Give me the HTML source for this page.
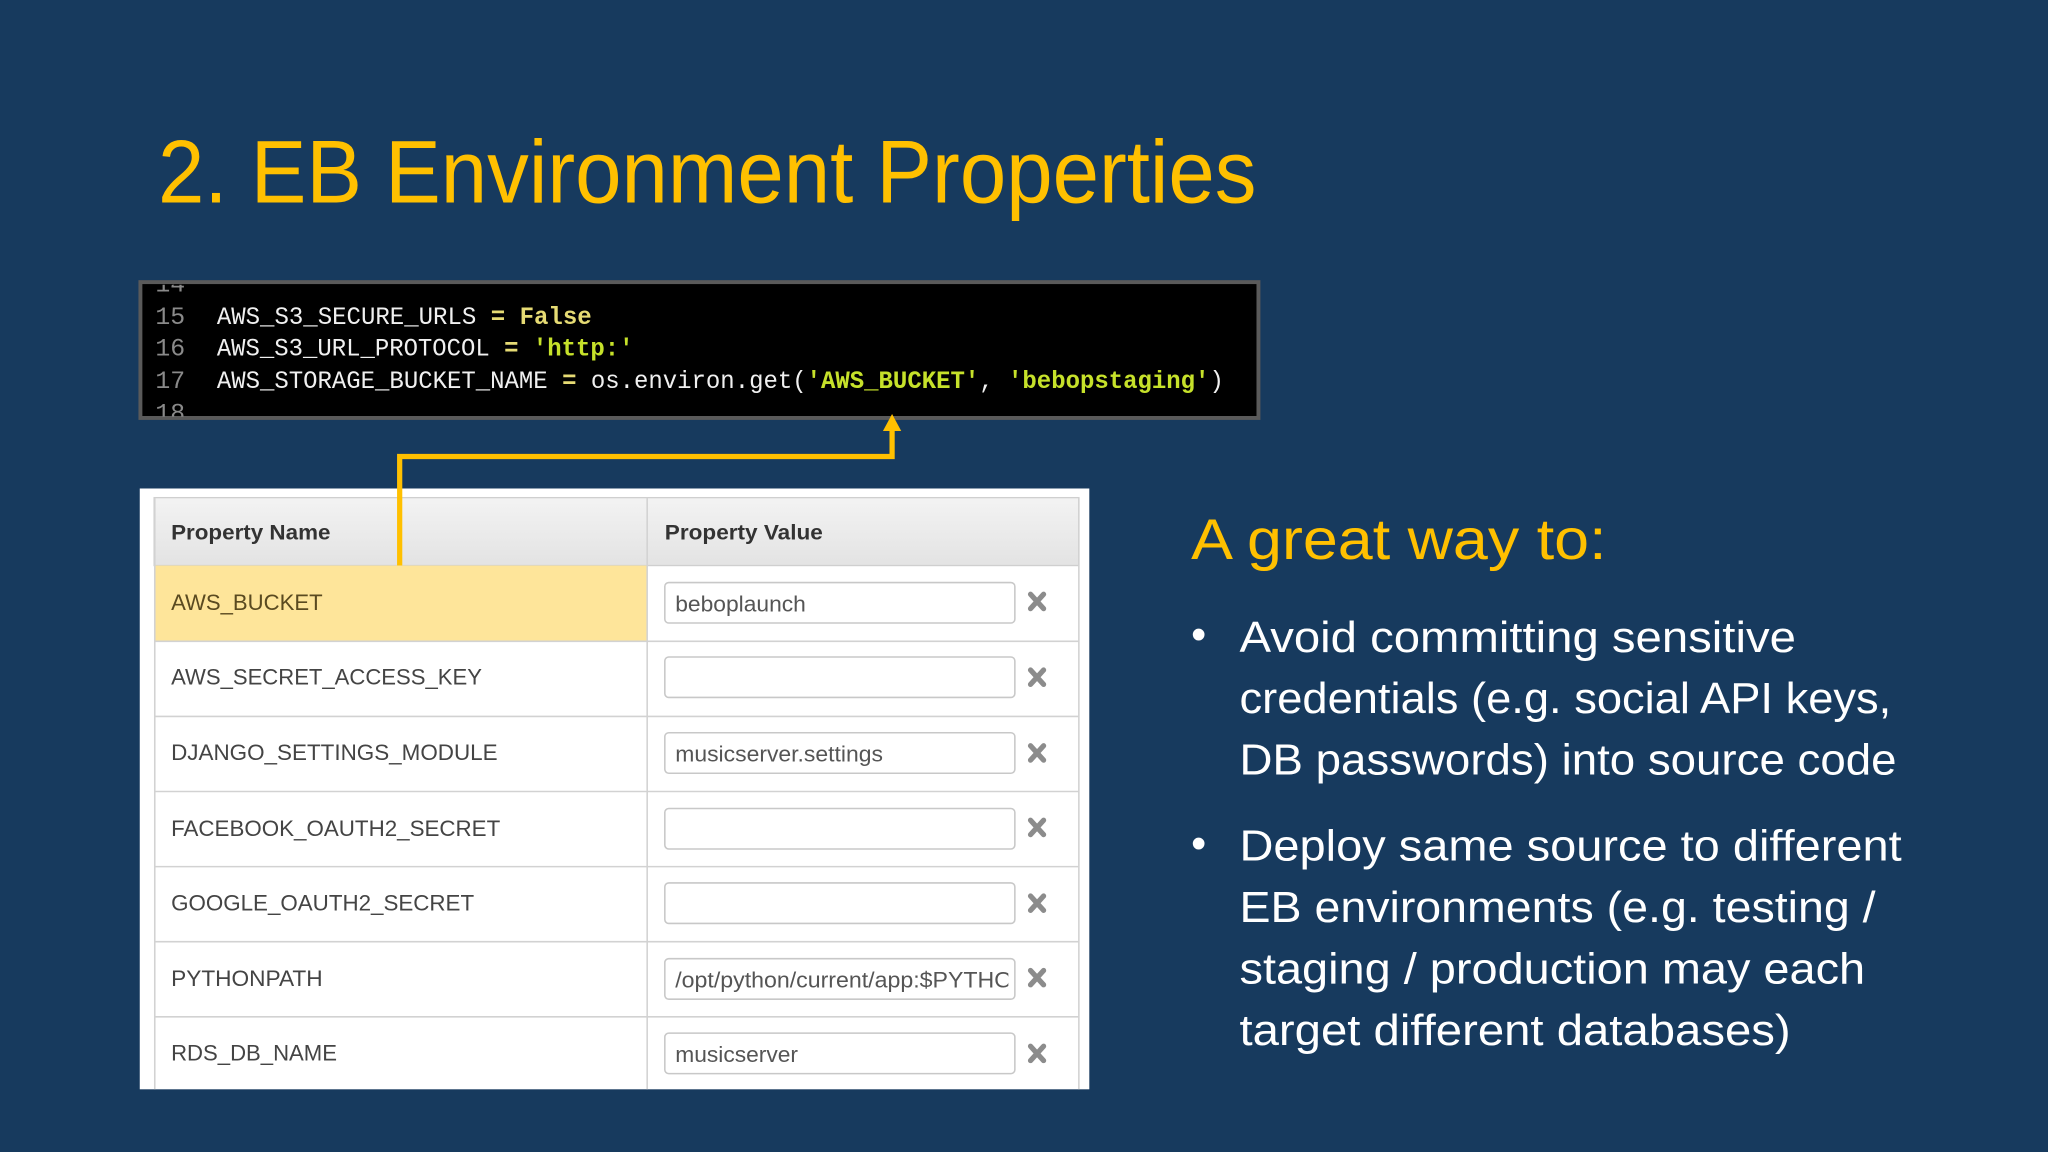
<!DOCTYPE html>
<html><head><meta charset="utf-8"><style>
html,body{margin:0;padding:0;background:#173a5e;}
svg{display:block}
</style></head><body>
<svg width="2048" height="1152" viewBox="0 0 1568 882" xmlns="http://www.w3.org/2000/svg">
<rect width="1568" height="882" fill="#173a5e"/>
<text x="121" y="155" font-family="Liberation Sans, sans-serif" font-size="68" fill="#ffc000" textLength="841" lengthAdjust="spacingAndGlyphs">2. EB Environment Properties</text>

<!-- code box -->
<rect x="107.5" y="216" width="856" height="104" fill="#000" stroke="#5a5a5a" stroke-width="3"/>
<clipPath id="cc"><rect x="109" y="218" width="853" height="101"/></clipPath>
<g clip-path="url(#cc)" font-family="Liberation Mono, monospace" font-size="19">
<text x="119" y="223" fill="#8a8a8a">14</text>
<text x="119" y="248" fill="#8a8a8a">15</text>
<text x="119" y="272" fill="#8a8a8a">16</text>
<text x="119" y="297" fill="#8a8a8a">17</text>
<text x="119" y="322" fill="#8a8a8a">18</text>
<text x="166" y="248" fill="#f0f0f0" textLength="287" lengthAdjust="spacingAndGlyphs">AWS_S3_SECURE_URLS <tspan fill="#e6db74" font-weight="bold">=</tspan> <tspan fill="#e6db74" font-weight="bold">False</tspan></text>
<text x="166" y="272" fill="#f0f0f0" textLength="319" lengthAdjust="spacingAndGlyphs">AWS_S3_URL_PROTOCOL <tspan fill="#e6db74" font-weight="bold">=</tspan> <tspan fill="#c6e12a" font-weight="bold">'http:'</tspan></text>
<text x="166" y="297" fill="#f0f0f0" textLength="771" lengthAdjust="spacingAndGlyphs">AWS_STORAGE_BUCKET_NAME <tspan fill="#e6db74" font-weight="bold">=</tspan> os.environ.get(<tspan fill="#c6e12a" font-weight="bold">'AWS_BUCKET'</tspan>, <tspan fill="#c6e12a" font-weight="bold">'bebopstaging'</tspan>)</text>
</g>

<!-- table panel -->
<rect x="107" y="374" width="727" height="460" fill="#fff"/>
<defs><linearGradient id="hg" x1="0" y1="0" x2="0" y2="1"><stop offset="0" stop-color="#f3f3f3"/><stop offset="1" stop-color="#e3e3e3"/></linearGradient></defs>
<rect x="118" y="381" width="708" height="52" fill="url(#hg)" stroke="#cfcfcf"/>
<rect x="118.5" y="433" width="377" height="58" fill="#fee59a"/>
<g stroke="#d2d2d2" stroke-width="1.2">
<line x1="118.5" y1="381" x2="118.5" y2="834"/>
<line x1="826" y1="381" x2="826" y2="834"/>
<line x1="495.5" y1="381" x2="495.5" y2="834"/>
<line x1="118" y1="491" x2="826" y2="491"/>
<line x1="118" y1="548.5" x2="826" y2="548.5"/>
<line x1="118" y1="606" x2="826" y2="606"/>
<line x1="118" y1="663.5" x2="826" y2="663.5"/>
<line x1="118" y1="721" x2="826" y2="721"/>
<line x1="118" y1="778.5" x2="826" y2="778.5"/>
</g>
<g font-family="Liberation Sans, sans-serif" font-size="16.5" font-weight="bold" fill="#333">
<text x="131" y="413" textLength="122" lengthAdjust="spacingAndGlyphs">Property Name</text>
<text x="509" y="413" textLength="121" lengthAdjust="spacingAndGlyphs">Property Value</text>
</g>
<g font-family="Liberation Sans, sans-serif" font-size="17" fill="#444">
<text x="131" y="467" fill="#5a4a20" textLength="116" lengthAdjust="spacingAndGlyphs">AWS_BUCKET</text>
<text x="131" y="524" textLength="238" lengthAdjust="spacingAndGlyphs">AWS_SECRET_ACCESS_KEY</text>
<text x="131" y="582" textLength="250" lengthAdjust="spacingAndGlyphs">DJANGO_SETTINGS_MODULE</text>
<text x="131" y="640" textLength="252" lengthAdjust="spacingAndGlyphs">FACEBOOK_OAUTH2_SECRET</text>
<text x="131" y="697" textLength="232" lengthAdjust="spacingAndGlyphs">GOOGLE_OAUTH2_SECRET</text>
<text x="131" y="755" textLength="116" lengthAdjust="spacingAndGlyphs">PYTHONPATH</text>
<text x="131" y="812" textLength="127" lengthAdjust="spacingAndGlyphs">RDS_DB_NAME</text>
</g>
<g fill="#fff" stroke="#c8c8c8" stroke-width="1.2">
<rect x="509" y="446" width="268" height="31" rx="3"/>
<rect x="509" y="503" width="268" height="31" rx="3"/>
<rect x="509" y="561" width="268" height="31" rx="3"/>
<rect x="509" y="619" width="268" height="31" rx="3"/>
<rect x="509" y="676" width="268" height="31" rx="3"/>
<rect x="509" y="734" width="268" height="31" rx="3"/>
<rect x="509" y="791" width="268" height="31" rx="3"/>
</g>
<clipPath id="ic"><rect x="510" y="730" width="262" height="40"/></clipPath>
<g font-family="Liberation Sans, sans-serif" font-size="17" fill="#555">
<text x="517" y="468" textLength="100" lengthAdjust="spacingAndGlyphs">beboplaunch</text>
<text x="517" y="583" textLength="159" lengthAdjust="spacingAndGlyphs">musicserver.settings</text>
<text x="517" y="756" clip-path="url(#ic)" textLength="258" lengthAdjust="spacingAndGlyphs">/opt/python/current/app:$PYTHO</text>
<text x="517" y="813" textLength="94" lengthAdjust="spacingAndGlyphs">musicserver</text>
</g>
<g stroke="#8c8c8c" stroke-width="4" stroke-linecap="round">
<path d="M789 455l10 11M799 455l-10 11"/>
<path d="M789 513l10 11M799 513l-10 11"/>
<path d="M789 571l10 11M799 571l-10 11"/>
<path d="M789 628l10 11M799 628l-10 11"/>
<path d="M789 686l10 11M799 686l-10 11"/>
<path d="M789 743l10 11M799 743l-10 11"/>
<path d="M789 801l10 11M799 801l-10 11"/>
</g>

<!-- arrow -->
<path d="M306 433V349.5H683V328" fill="none" stroke="#ffc000" stroke-width="4"/>
<path d="M676 330L683 317L690 330Z" fill="#ffc000"/>

<!-- right text -->
<text x="912" y="428" font-family="Liberation Sans, sans-serif" font-size="44" fill="#ffc000" textLength="318" lengthAdjust="spacingAndGlyphs">A great way to:</text>
<g font-family="Liberation Sans, sans-serif" font-size="33" fill="#fff">
<text x="912" y="497">•</text>
<text x="949" y="499" textLength="426" lengthAdjust="spacingAndGlyphs">Avoid committing sensitive</text>
<text x="949" y="546" textLength="499" lengthAdjust="spacingAndGlyphs">credentials (e.g. social API keys,</text>
<text x="949" y="593" textLength="503" lengthAdjust="spacingAndGlyphs">DB passwords) into source code</text>
<text x="912" y="657">•</text>
<text x="949" y="659" textLength="507" lengthAdjust="spacingAndGlyphs">Deploy same source to different</text>
<text x="949" y="706" textLength="487" lengthAdjust="spacingAndGlyphs">EB environments (e.g. testing /</text>
<text x="949" y="753" textLength="479" lengthAdjust="spacingAndGlyphs">staging / production may each</text>
<text x="949" y="800" textLength="422" lengthAdjust="spacingAndGlyphs">target different databases)</text>
</g>
</svg>
</body></html>
